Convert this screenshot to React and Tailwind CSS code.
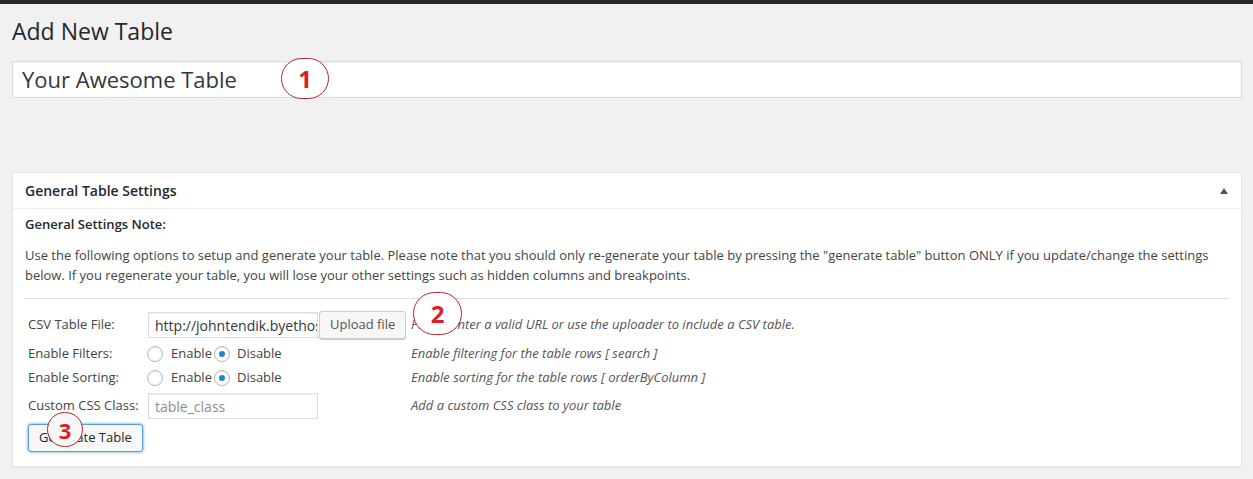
import { useState } from 'react';

function Radio({ checked }) {
    return (
        <span className="w-[16px] h-[16px] rounded-full border border-[#b4b9be] bg-white shadow-[inset_0_1px_2px_rgba(0,0,0,0.1)] flex items-center justify-center shrink-0">
            {checked && <span className="w-[6px] h-[6px] rounded-full bg-[#1e8cbe]" />}
        </span>
    );
}

function RadioPair({ value }) {
    return (
        <div className="flex items-center -ml-[1px]">
            <Radio checked={value === 'enable'} />
            <span className="ml-[8px]">Enable</span>
            <span className="ml-[2px]"><Radio checked={value === 'disable'} /></span>
            <span className="ml-[7px]">Disable</span>
        </div>
    );
}

function Marker({ n, className }) {
    return (
        <div className={`absolute rounded-full border border-[#b2262d] flex items-center justify-center text-[#dc1f26] font-bold leading-none ${className}`}>
            {n}
        </div>
    );
}

export default function App() {
    const [filters] = useState('disable');
    const [sorting] = useState('disable');

    return (
        <div className="relative min-h-[479px] bg-[#f1f1f1] font-['Open_Sans',sans-serif] text-[13px] text-[#444]">
            {/* Admin bar edge */}
            <div className="h-[4px] bg-[#23282d]" />

            <div className="pl-[12px] pr-[11px]">
                <h1 className="mt-[12px] text-[23px] leading-[30px] font-normal text-[#23282d]">Add New Table</h1>

                {/* Title */}
                <div className="mt-[15px] h-[37px] bg-white border border-[#ddd] shadow-[inset_0_1px_2px_rgba(0,0,0,0.07)] flex items-center px-[9px]">
                    <span className="text-[22px] text-[#32373c]">Your Awesome Table</span>
                </div>

                {/* Settings panel */}
                <div className="mt-[74px] bg-white border border-[#e5e5e5] shadow-[0_1px_1px_rgba(0,0,0,0.04)]">
                    <div className="h-[36px] flex items-center justify-between px-[12px] border-b border-[#eee]">
                        <span className="text-[14px] font-semibold text-[#23282d]">General Table Settings</span>
                        <span className="mr-[1px] w-0 h-0 border-l-[4px] border-r-[4px] border-b-[6px] border-l-transparent border-r-transparent border-b-[#555]" />
                    </div>

                    <div className="px-[12px] pt-[6px] pb-[14px]">
                        <p className="font-semibold leading-[19px] text-[#23282d]">General Settings Note:</p>
                        <p className="mt-[12px] leading-[19.5px]">
                            Use the following options to setup and generate your table. Please note that you should only re-generate your table by pressing the "generate table" button ONLY if you update/change the settings<br />
                            below. If you regenerate your table, you will lose your other settings such as hidden columns and breakpoints.
                        </p>
                        <div className="mt-[13px] border-t border-[#ddd]" />

                        <div className="pl-[3px] mt-[11px]">
                            {/* CSV */}
                            <div className="grid grid-cols-[120px_263px_1fr] items-center h-[30px]">
                                <span>CSV Table File:</span>
                                <div className="flex items-center">
                                    <div className="w-[170px] h-[26px] border border-[#ddd] shadow-[inset_0_1px_2px_rgba(0,0,0,0.07)] px-[6px] flex items-center overflow-hidden whitespace-nowrap text-[14px] text-[#32373c]">
                                        http://johntendik.byethost7.com/table.csv
                                    </div>
                                    <button className="ml-[1px] h-[28px] px-[10px] bg-[#f7f7f7] border border-[#ccc] rounded-[3px] shadow-[0_1px_0_#ccc] text-[13px] text-[#555]">
                                        Upload file
                                    </button>
                                </div>
                                <span className="italic text-[#555]">Please enter a valid URL or use the uploader to include a CSV table.</span>
                            </div>

                            {/* Filters */}
                            <div className="mt-[2px] grid grid-cols-[120px_263px_1fr] items-center h-[24px]">
                                <span>Enable Filters:</span>
                                <RadioPair value={filters} />
                                <span className="italic text-[#555]">Enable filtering for the table rows [ search ]</span>
                            </div>

                            {/* Sorting */}
                            <div className="grid grid-cols-[120px_263px_1fr] items-center h-[24px]">
                                <span>Enable Sorting:</span>
                                <RadioPair value={sorting} />
                                <span className="italic text-[#555]">Enable sorting for the table rows [ orderByColumn ]</span>
                            </div>

                            {/* Custom class */}
                            <div className="mt-[1px] grid grid-cols-[120px_263px_1fr] items-center h-[30px]">
                                <span>Custom CSS Class:</span>
                                <div className="w-[170px] h-[26px] border border-[#ddd] shadow-[inset_0_1px_2px_rgba(0,0,0,0.07)] px-[6px] flex items-center text-[14px] text-[#8a8f94]">
                                    table_class
                                </div>
                                <span className="italic text-[#555]">Add a custom CSS class to your table</span>
                            </div>

                            <button className="mt-[3px] h-[28px] px-[10px] bg-[#f7f7f7] border border-[#5b9dd9] rounded-[3px] shadow-[0_0_3px_rgba(0,115,170,0.8)] text-[13px] text-[#23282d]">
                                Generate Table
                            </button>
                        </div>
                    </div>
                </div>
            </div>

            {/* Annotation markers */}
            <Marker n="1" className="left-[281px] top-[58px] w-[48px] h-[41px] text-[24px] bg-white" />
            <Marker n="2" className="left-[413px] top-[292px] w-[49px] h-[43px] text-[24px] bg-white" />
            <Marker n="3" className="left-[47px] top-[412px] w-[36px] h-[35px] text-[22px] bg-[#f7f7f7]" />
        </div>
    );
}
